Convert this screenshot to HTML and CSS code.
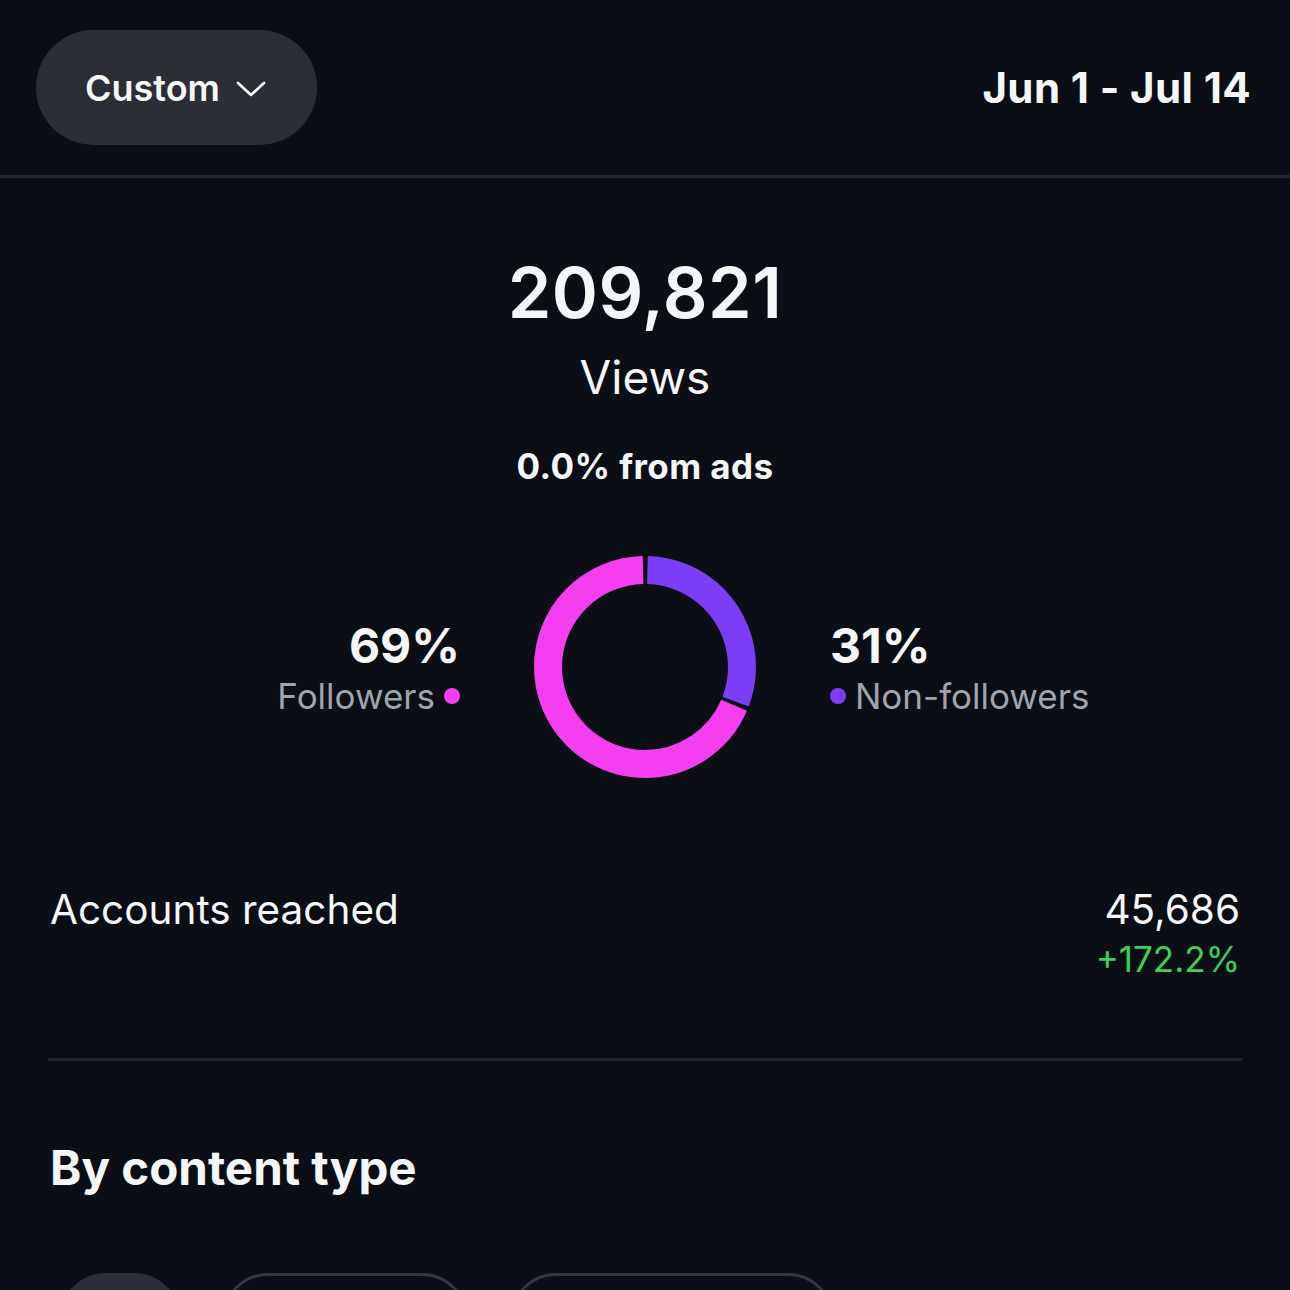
FILE: index.html
```html
<!DOCTYPE html>
<html lang="en">
<head>
    <meta charset="UTF-8">
    <meta name="viewport" content="width=device-width, initial-scale=1.0">
    <title>Insights - Views</title>
    <link rel="stylesheet" href="styles.css">
</head>
<body>
    <header class="topbar">
        <button class="range-btn">
            Custom
            <svg class="chevron" width="30" height="16" viewBox="0 0 30 16">
                <path d="M2 2 L15 14 L28 2" fill="none" stroke="#fff" stroke-width="2.6" stroke-linecap="round" stroke-linejoin="round"/>
            </svg>
        </button>
        <div class="range-date">Jun 1 - Jul 14</div>
    </header>

    <main>
        <section class="hero">
            <div class="hero-value">209,821</div>
            <div class="hero-label">Views</div>
            <div class="hero-ads">0.0% from ads</div>
        </section>

        <section class="split">
            <div class="split-side left">
                <div class="split-pct">69%</div>
                <div class="split-name">Followers <span class="dot pink"></span></div>
            </div>
            <svg class="donut" width="224" height="224" viewBox="0 0 224 224">
                <g transform="rotate(-90 112 112)">
                    <circle cx="112" cy="112" r="97" fill="none" stroke="#7b3ef6" stroke-width="28"
                            stroke-dasharray="185 425" stroke-dashoffset="-2.5"/>
                    <circle cx="112" cy="112" r="97" fill="none" stroke="#f43ef0" stroke-width="28"
                            stroke-dasharray="415 195" stroke-dashoffset="-191.5"/>
                </g>
            </svg>
            <div class="split-side right">
                <div class="split-pct">31%</div>
                <div class="split-name"><span class="dot purple"></span>Non-followers</div>
            </div>
        </section>

        <section class="stat-row">
            <div class="stat-name">Accounts reached</div>
            <div class="stat-nums">
                <div class="stat-value">45,686</div>
                <div class="stat-change">+172.2%</div>
            </div>
        </section>

        <hr class="rule">

        <h2 class="section-title">By content type</h2>

        <div class="pills">
            <button class="pill active" aria-label="All"></button>
            <button class="pill" aria-label="Followers"></button>
            <button class="pill" aria-label="Non-followers"></button>
        </div>
    </main>
</body>
</html>
```

FILE: styles.css
```css
* { margin: 0; padding: 0; box-sizing: border-box; font-family: Inter, "Noto Sans", sans-serif; }
body { background-color: #0b0e14; color: #f5f6f7; width: 1290px; height: 1290px; overflow: hidden; }

.topbar { display: flex; justify-content: space-between; align-items: center; padding: 30px 39px 30px 36px;
          border-bottom: 3px solid #23262d; }
.range-btn { display: flex; align-items: center; gap: 16px; height: 115px; width: 281px; padding-left: 49px;
             background-color: #2b2e35; color: #f5f6f7; border: none; border-radius: 58px;
             font-size: 36px; font-weight: 600; }
.chevron { margin-top: 2px; }
.range-date { font-size: 42px; font-weight: 700; letter-spacing: 0.4px; }

.hero { display: flex; flex-direction: column; align-items: center; padding-top: 73px; }
.hero-value { font-size: 70px; font-weight: 600; line-height: 1.2; letter-spacing: 0.5px; }
.hero-label { font-size: 46px; font-weight: 400; line-height: 1.2; margin-top: 15px; }
.hero-ads { font-size: 35px; font-weight: 700; line-height: 1.2; margin-top: 40px; letter-spacing: 0.4px; }

.split { display: grid; grid-template-columns: 1fr auto 1fr; column-gap: 73px; align-items: center; margin-top: 68px; }
.split-side { display: flex; flex-direction: column; }
.split-side.left { align-items: flex-end; }
.split-side.right { align-items: flex-start; }
.split-pct { font-size: 48px; font-weight: 700; line-height: 1.2; }
.split-name { display: flex; align-items: center; gap: 9px; font-size: 35px; line-height: 1.2; color: #9fa4ad; }
.dot { width: 16px; height: 16px; border-radius: 50%; display: inline-block; }
.dot.pink { background-color: #f43ef0; }
.dot.purple { background-color: #7b3ef6; }

.stat-row { display: flex; justify-content: space-between; align-items: flex-start; padding: 0 50px; margin-top: 107px; }
.stat-name { font-size: 40.5px; line-height: 1.2; }
.stat-nums { text-align: right; }
.stat-value { font-size: 40.5px; line-height: 1.2; }
.stat-change { font-size: 35px; line-height: 1.2; margin-top: 3px; color: #3ccf5e; }

.rule { border: none; height: 3px; background-color: #22252c; margin: 78px 48px 0; }

.section-title { font-size: 47.5px; font-weight: 700; line-height: 1.2; margin: 78px 50px 0; }

.pills { display: flex; gap: 42px; padding-left: 60px; margin-top: 77px; }
.pill { height: 92px; border-radius: 46px; background: transparent; border: 3px solid #33363d; }
.pill.active { width: 120px; background-color: #2b2e35; border-color: #2b2e35; }
.pill:nth-child(2) { width: 246px; }
.pill:nth-child(3) { width: 324px; }
```
